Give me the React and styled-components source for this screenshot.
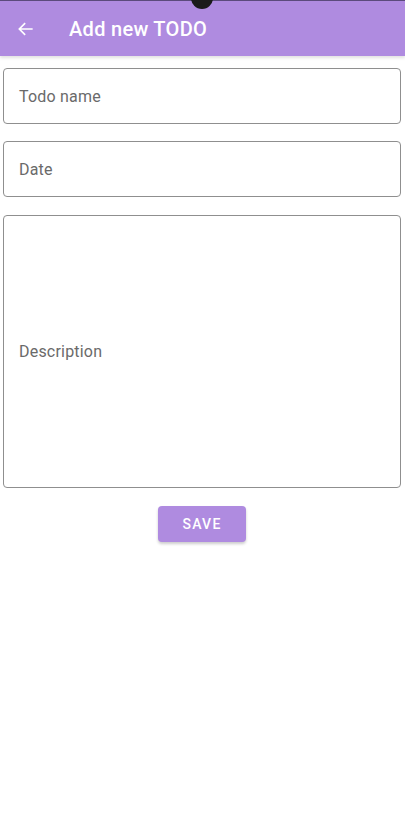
import React from "react";
import styled, { createGlobalStyle } from "styled-components";

const GlobalStyle = createGlobalStyle`
  html, body {
    margin: 0;
    padding: 0;
    background: #ffffff;
    font-family: Roboto, "Noto Sans", sans-serif;
  }
`;

const Page = styled.div`
  width: 405px;
  min-height: 818px;
  background: #fff;
  position: relative;
  overflow: hidden;
`;

const AppBar = styled.header`
  height: 56px;
  box-sizing: border-box;
  border-top: 1px solid #5b4a7c;
  background: #af8be0;
  display: flex;
  align-items: center;
  padding-left: 14px;
  box-shadow: 0 2px 3px rgba(0, 0, 0, 0.12);
  position: relative;
`;

const Camera = styled.div`
  position: absolute;
  left: 191px;
  top: -14px;
  width: 22px;
  height: 22px;
  border-radius: 50%;
  background: #1b1b1b;
`;

const BackButton = styled.button`
  border: none;
  background: none;
  padding: 0;
  width: 24px;
  height: 24px;
  display: flex;
  align-items: center;
  justify-content: center;
  color: #fff;
`;

const Title = styled.h1`
  margin: 0 0 0 31px;
  font-size: 20px;
  font-weight: 500;
  color: #fff;
  letter-spacing: 0.3px;
`;

const Form = styled.form`
  display: flex;
  flex-direction: column;
  padding: 12px 4px 0 3px;
  gap: 17px;
`;

const Field = styled.div`
  height: ${(p) => p.$height}px;
  margin-top: ${(p) => p.$shift || 0}px;
  box-sizing: border-box;
  border: 1px solid #8f8f8f;
  border-radius: 4px;
  display: flex;
  align-items: center;
  padding-left: 15px;
  font-size: 16px;
  color: #6a6a6a;
  letter-spacing: 0.2px;
`;

const Actions = styled.div`
  display: flex;
  justify-content: center;
  margin-top: 1px;
`;

const SaveButton = styled.button`
  width: 88px;
  height: 36px;
  border: none;
  border-radius: 4px;
  background: #af8be0;
  color: #fff;
  font-family: Roboto, sans-serif;
  font-size: 14px;
  font-weight: 500;
  letter-spacing: 1.25px;
  box-shadow: 0 2px 3px rgba(0, 0, 0, 0.2);
`;

export default function App() {
  return (
    <Page>
      <GlobalStyle />
      <AppBar>
        <Camera />
        <BackButton aria-label="back">
          <svg width="20" height="20" viewBox="0 0 24 24" fill="none" stroke="#fff" strokeWidth="2">
            <path d="M20 12H4M11 5l-7 7 7 7" />
          </svg>
        </BackButton>
        <Title>Add new TODO</Title>
      </AppBar>
      <Form>
        <Field $height={56}>Todo name</Field>
        <Field $height={56}>Date</Field>
        <Field $height={273} $shift={1}>Description</Field>
        <Actions>
          <SaveButton type="button">SAVE</SaveButton>
        </Actions>
      </Form>
    </Page>
  );
}
